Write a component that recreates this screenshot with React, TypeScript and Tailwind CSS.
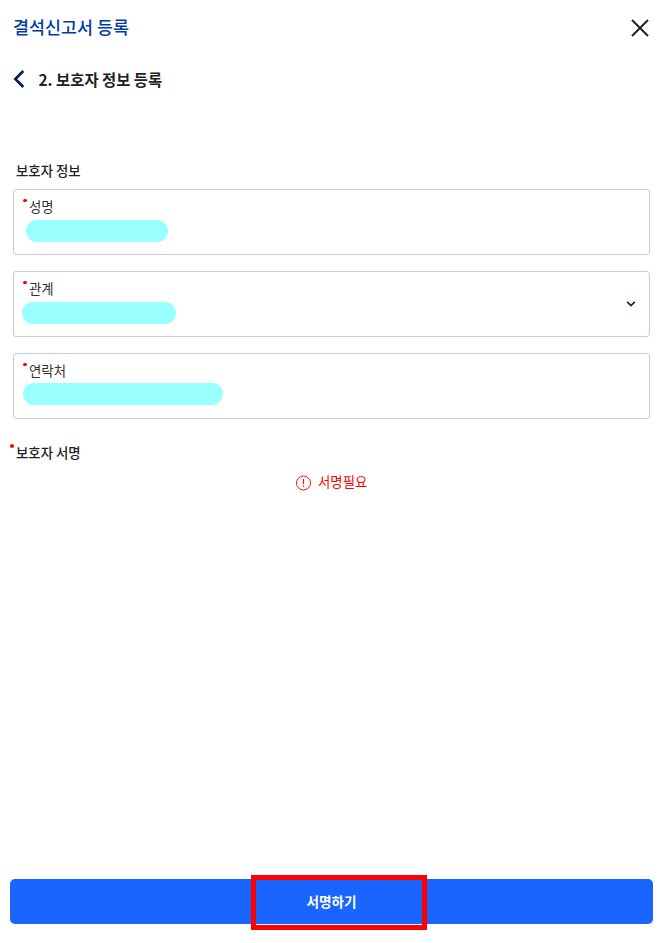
import React from 'react';

function Dot({ className }: { className: string }) {
  return <span className={`absolute rounded-full bg-[#fa0000] ${className}`} />;
}

function Field({ label, mask, children }: { label: string; mask: string; children?: React.ReactNode }) {
  return (
    <div className="relative h-[66px] rounded-[3px] border border-[#cccccc]">
      <Dot className="left-[9px] top-[9px] h-[3px] w-1" />
      <div className="ml-[15px] mt-[6px] h-5 text-[13.4px] leading-5 text-[#333]">{label}</div>
      <div className={`rounded-full bg-[#99ffff] ${mask}`} />
      {children}
    </div>
  );
}

export default function App() {
  return (
    <div
      className="flex h-[943px] w-[659px] flex-col overflow-hidden bg-white text-[#222]"
      style={{ fontFamily: '"Noto Sans CJK KR", "Noto Sans", sans-serif' }}
    >
      <header className="flex h-[56px] items-center justify-between pl-[13px] pr-[10px]">
        <h1 className="mb-[3px] text-[17.4px] font-medium leading-6 text-[#003ca6]">결석신고서 등록</h1>
        <svg width="18" height="18" viewBox="0 0 18 18" fill="none" stroke="#222" strokeWidth="2">
          <path d="M1 1L17 17M17 1L1 17" />
        </svg>
      </header>
      <div className="flex h-[46px] items-center pl-[13px]">
        <svg width="12" height="18" viewBox="0 0 12 18" fill="none" stroke="#001e50" strokeWidth="2.6">
          <path d="M10.3 1L2.3 9L10.3 17" />
        </svg>
        <h2 className="ml-[13.5px] text-[15.4px] font-bold leading-6">2. 보호자 정보 등록</h2>
      </div>
      <h3 className="ml-[16px] mt-[58px] h-5 text-[13.4px] font-medium leading-5">보호자 정보</h3>
      <div className="ml-[13px] mr-[9px] mt-[9px] flex flex-col gap-4">
        <Field label="성명" mask="ml-[12px] mt-[4px] h-[22px] w-[142px]" />
        <Field label="관계" mask="ml-[8px] mt-[4px] h-[22px] w-[154px]">
          <svg className="absolute right-[13px] top-[28px]" width="10" height="8" viewBox="0 0 10 8" fill="none" stroke="#102a56" strokeWidth="1.8">
            <path d="M1.2 1.8L5 5.6L8.8 1.8" />
          </svg>
        </Field>
        <Field label="연락처" mask="ml-[9px] mt-[3px] h-[22px] w-[200px]" />
      </div>
      <h3 className="relative ml-[16px] mt-[23px] h-5 text-[13.4px] font-medium leading-5">
        <Dot className="-left-[6px] top-[2px] h-1 w-1" />
        보호자 서명
      </h3>
      <div className="mt-[9px] flex h-5 items-center pl-[296px] text-[13.4px] text-[#ff0000]">
        <svg className="mt-[3px]" width="16" height="16" viewBox="0 0 16 16" fill="none" stroke="#ff1010">
          <circle cx="7.5" cy="8" r="7" />
          <path d="M7.5 4V9.2M7.5 10.6V12" strokeWidth="1.2" />
        </svg>
        <span className="ml-[6px] leading-5">서명필요</span>
      </div>
      <div className="relative ml-[10px] mr-[6px] mt-auto mb-[19px] h-[45px]">
        <button className="block h-[45px] w-full rounded-[5px] bg-[#1a64ff] text-[13.6px] font-bold leading-[45px] text-white">
          서명하기
        </button>
        <div className="absolute -top-1 left-[241px] h-[55px] w-[176px] border-[5px] border-[#ff0000]" />
      </div>
    </div>
  );
}
